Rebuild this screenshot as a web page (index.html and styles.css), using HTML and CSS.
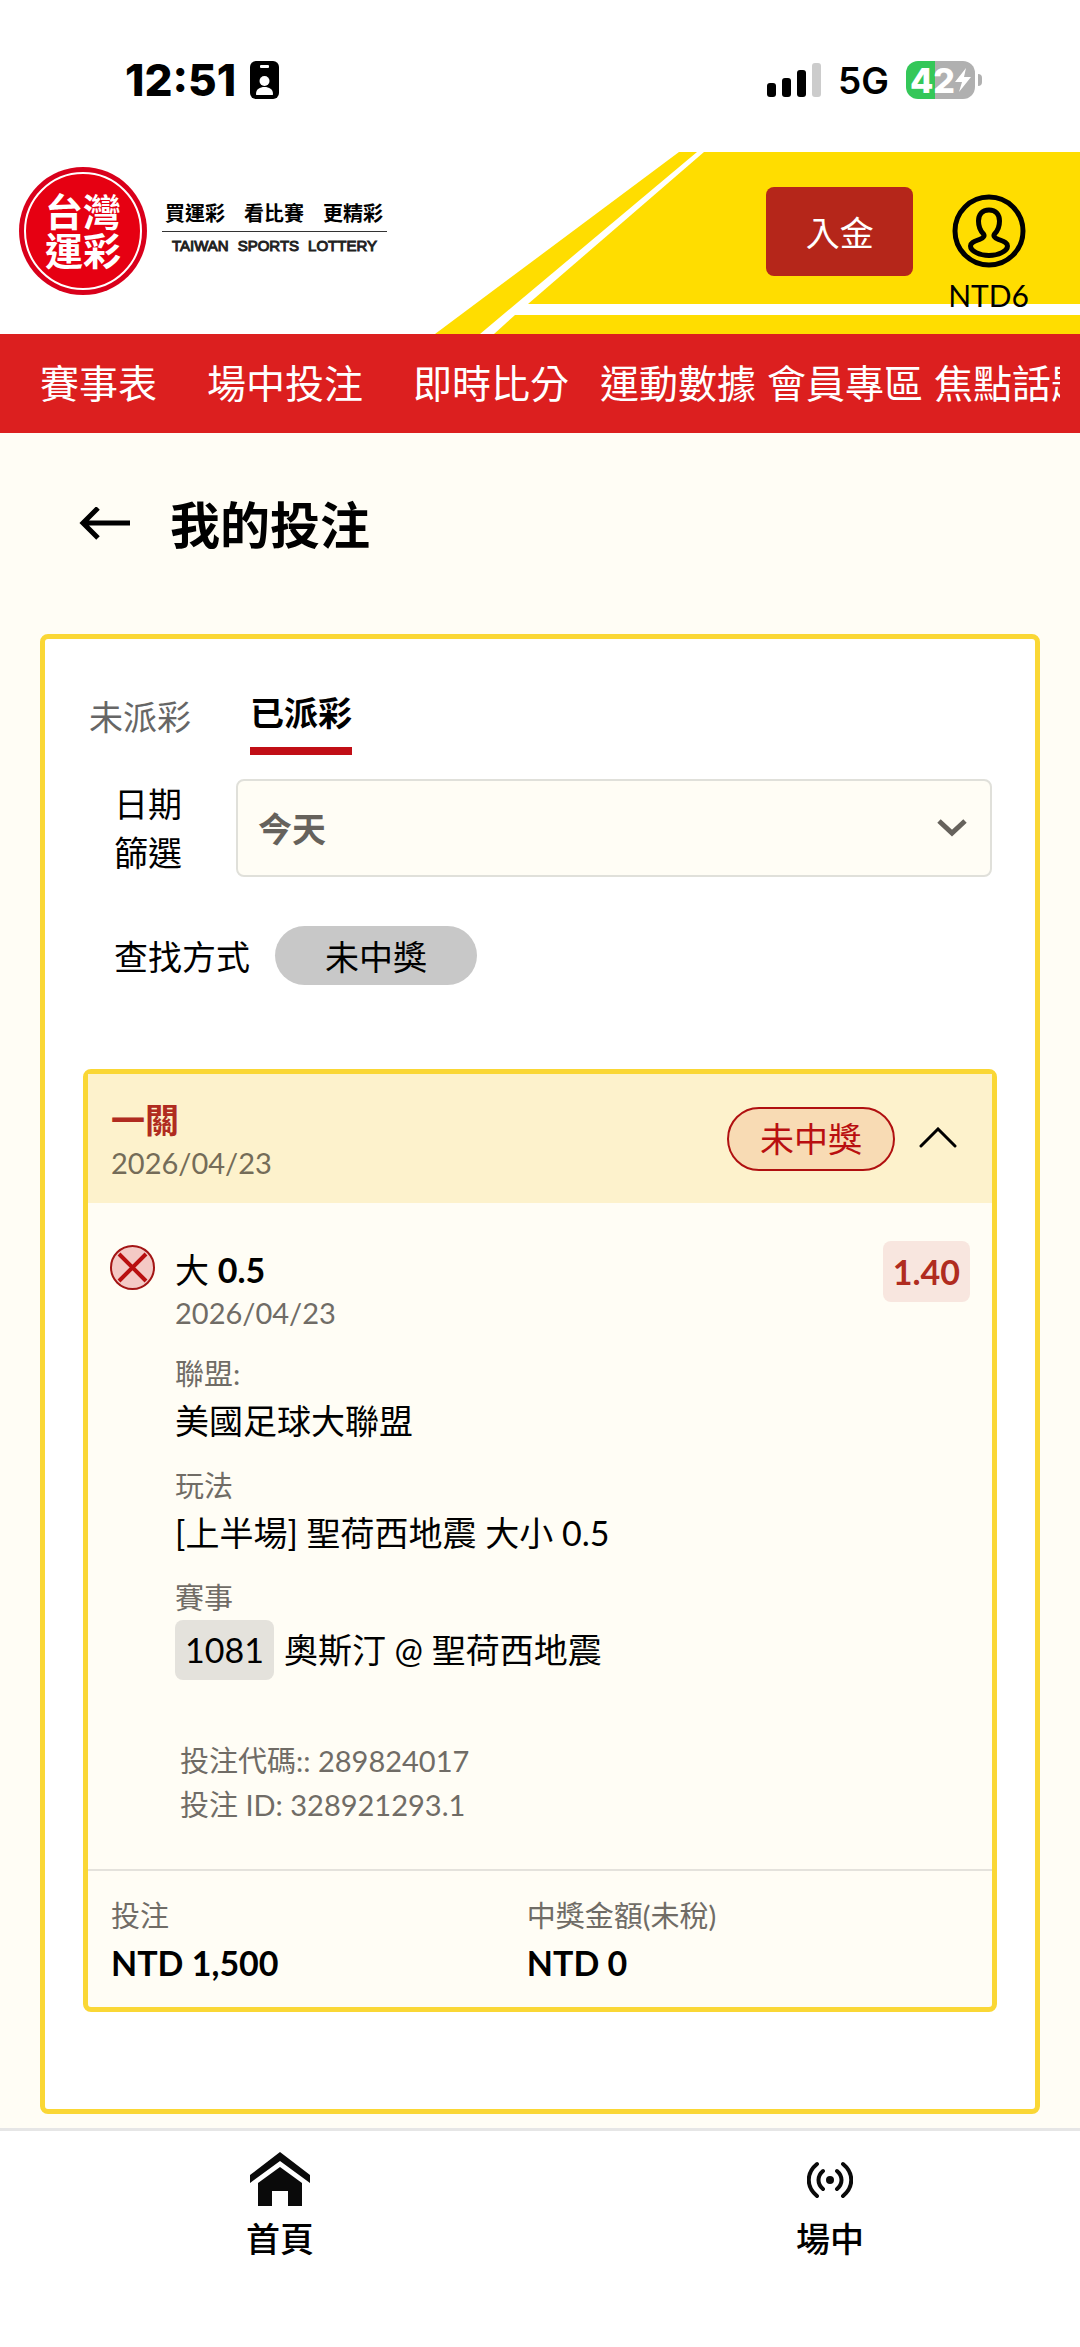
FILE: index.html
```html
<!DOCTYPE html>
<html lang="zh-Hant">
<head>
<meta charset="utf-8">
<meta name="viewport" content="width=device-width, initial-scale=1">
<title>我的投注</title>
<link rel="stylesheet" href="styles.css">
</head>
<body>
<div class="status">
  <div class="status-side">
    <span class="time">12:51</span>
    <svg class="id-badge" width="30" height="38" viewBox="0 0 30 38" aria-hidden="true">
      <rect width="29" height="38" rx="6"/>
      <rect x="10" y="4" width="9" height="3" rx="1" fill="#fff"/>
      <circle cx="14.500" cy="20" r="5" fill="#fff"/>
      <path d="M6 33c0-5 4-7 8.500-7s8.500 2 8.500 7c0 1-.5 1-1 1H7c-.5 0-1 0-1-1z" fill="#fff"/>
    </svg>
  </div>
  <div class="status-side status-right">
    <svg width="54" height="34" viewBox="0 0 54 34" aria-hidden="true">
      <rect x="0" y="20" width="9" height="14" rx="3"/>
      <rect x="15" y="15" width="9" height="19" rx="3"/>
      <rect x="30" y="7" width="9" height="27" rx="3"/>
      <rect x="45" y="0" width="9" height="34" rx="3" fill="#ccc"/>
    </svg>
    <span class="network">5G</span>
    <div class="battery">
      <div class="battery-body"><span>42</span>
        <svg width="16" height="24" viewBox="0 0 16 24" aria-hidden="true"><path d="M11 0 0 14h7L4 24 16 9H9z" fill="#fff"/></svg>
      </div>
      <div class="battery-nub"></div>
    </div>
  </div>
</div>

<header class="header">
  <svg class="header-art" viewBox="0 0 645 182" preserveAspectRatio="none" aria-hidden="true">
    <path d="M244 0h18L45 182H0z" fill="#fd0"/>
    <path d="M269 0H645V152H93z" fill="#fd0"/>
    <path d="M80 163H645V182H59z" fill="#fd0"/>
  </svg>
  <a class="brand" href="#">
    <span class="seal"><span class="seal-ring"><span>台灣</span><span>運彩</span></span></span>
    <span class="brand-text">
      <span class="slogan"><span>買運彩</span><span>看比賽</span><span>更精彩</span></span>
      <span class="brand-en"><span>TAIWAN</span><span>SPORTS</span><span>LOTTERY</span></span>
    </span>
  </a>
  <div class="account">
    <button class="deposit" type="button">入金</button>
    <a class="user" href="#">
      <svg width="74" height="74" viewBox="0 0 74 74" fill="none" stroke="#000" stroke-width="5" aria-hidden="true">
        <circle cx="37" cy="37" r="34"/>
        <path d="M37 16c-7 0-10.500 5-10.500 11 0 6 2 10 5 13 1.500 2-.5 4-3 5-6 2.500-10 3.500-10 7 0 5 9 9.500 18.500 9.500S55.500 57 55.500 52c0-3.500-4-4.500-10-7-2.500-1-4.500-3-3-5 3-3 5-7 5-13 0-6-3.500-11-10.500-11z"/>
      </svg>
      <span>NTD6</span>
    </a>
  </div>
</header>

<nav class="nav">
  <div class="nav-scroll">
    <a class="wide" href="#">賽事表</a>
    <a class="wide" href="#">場中投注</a>
    <a class="medium" href="#">即時比分</a>
    <a href="#">運動數據</a>
    <a href="#">會員專區</a>
    <a href="#">焦點話題</a>
  </div>
</nav>

<main class="main">
  <div class="title">
    <a href="#" aria-label="返回">
      <svg width="51" height="36" viewBox="0 0 51 36" fill="none" stroke="#000" stroke-width="5" aria-hidden="true"><path d="M19 1 4 16l15 15M4 16h47"/></svg>
    </a>
    <h1>我的投注</h1>
  </div>

  <section class="panel">
    <div class="tabs" role="tablist">
      <button class="tab" type="button" role="tab" aria-selected="false">未派彩</button>
      <button class="tab active" type="button" role="tab" aria-selected="true">已派彩</button>
    </div>
    <div class="filter">
      <label for="range">日期篩選</label>
      <div class="select">
        <select id="range"><option>今天</option></select>
        <svg width="30" height="18" viewBox="0 0 30 18" fill="none" stroke="#66625c" stroke-width="5" aria-hidden="true"><path d="M2 2l13 12L28 2"/></svg>
      </div>
    </div>
    <div class="mode">
      <span>查找方式</span>
      <button class="chip" type="button">未中獎</button>
    </div>

    <article class="bet">
      <header class="bet-head">
        <div class="bet-name">
          <h2>一關</h2>
          <p>2026/04/23</p>
        </div>
        <span class="result">未中獎</span>
        <button class="toggle" type="button" aria-label="收合">
          <svg width="38" height="24" viewBox="0 0 38 24" fill="none" stroke="#000" stroke-width="3" stroke-linecap="round" aria-hidden="true"><path d="M2 19 19 2l17 17"/></svg>
        </button>
      </header>
      <div class="bet-body">
        <svg class="lost" width="45" height="45" viewBox="0 0 45 45" aria-hidden="true">
          <circle cx="22.500" cy="22.500" r="21.500" fill="#f4c9c5" stroke="#a31515" stroke-width="2"/>
          <path d="M9 9l27 27M36 9 9 36" stroke="#b90f10" stroke-width="4"/>
        </svg>
        <div class="details">
          <h3>大 <b>0.5</b></h3>
          <p class="date">2026/04/23</p>
          <dl>
            <dt>聯盟:</dt>
            <dd>美國足球大聯盟</dd>
            <dt>玩法</dt>
            <dd>[上半場] 聖荷西地震 大小 0.5</dd>
            <dt>賽事</dt>
            <dd class="match"><span class="code">1081</span> 奧斯汀 @ 聖荷西地震</dd>
          </dl>
          <div class="ids">
            <p>投注代碼:: 289824017</p>
            <p>投注 ID: 328921293.1</p>
          </div>
        </div>
        <span class="odds">1.40</span>
      </div>
      <dl class="totals">
        <div><dt>投注</dt><dd>NTD 1,500</dd></div>
        <div><dt>中獎金額(未稅)</dt><dd>NTD 0</dd></div>
      </dl>
    </article>
  </section>
</main>

<nav class="bottom">
  <a href="#">
    <svg width="60" height="54" viewBox="0 0 60 54" fill="#0a0a0a" aria-hidden="true">
      <path d="M30 0 60 23v8L30 9 0 31v-8z"/>
      <path d="M30 15 52 31v23H38V39H22v15H8V31z"/>
    </svg>
    <span>首頁</span>
  </a>
  <a href="#">
    <svg width="46" height="54" viewBox="0 0 46 54" fill="none" stroke="#0a0a0a" stroke-width="4" stroke-linecap="round" aria-hidden="true">
      <circle cx="23" cy="28" r="4" fill="#0a0a0a" stroke="none"/>
      <path d="M16 19c-6 5-6 13 0 18M30 19c6 5 6 13 0 18M10 12c-11 9-11 23 0 32M36 12c11 9 11 23 0 32"/>
    </svg>
    <span>場中</span>
  </a>
</nav>
</body>
</html>
```
FILE: styles.css
```css
* { box-sizing: border-box; }
body {
  margin: 0;
  background: #fff;
  color: #000;
  font-family: Lato, "Noto Sans CJK TC", sans-serif;
  font-size: 34px;
}
a { color: inherit; text-decoration: none; }
h1, h2, h3, p, dl, dd { margin: 0; }
button, select { font: inherit; color: inherit; border: 0; padding: 0; background: none; }
svg { display: block; flex: none; }

/* Device status bar */
.status {
  display: flex;
  justify-content: space-between;
  height: 152px;
  padding: 8px 98px 0 125px;
  font-family: Inter, sans-serif;
}
.status-side { display: flex; align-items: center; gap: 14px; }
.status-right { gap: 17px; }
.time { font-size: 44px; font-weight: 800; }
.network { font-size: 37px; font-weight: 600; }
.battery { display: flex; align-items: center; gap: 3px; }
.battery-body {
  display: flex;
  align-items: center;
  justify-content: center;
  width: 69px;
  height: 38px;
  border-radius: 12px;
  background: linear-gradient(90deg, #34c759 42%, #b0b0b0 42%);
  color: #fff;
  font-size: 34px;
  font-weight: 800;
}
.battery-nub { width: 4px; height: 12px; border-radius: 0 4px 4px 0; background: #b0b0b0; }

/* Brand header */
.header {
  position: relative;
  display: flex;
  justify-content: space-between;
  height: 182px;
}
.header-art { position: absolute; top: 0; right: 0; width: 645px; height: 100%; }
.brand { position: relative; display: flex; gap: 15px; padding: 15px 0 0 19px; }
.seal {
  width: 128px;
  height: 128px;
  padding: 5px;
  border-radius: 50%;
  background: #d9001b;
}
.seal-ring {
  display: flex;
  flex-direction: column;
  align-items: center;
  justify-content: center;
  height: 118px;
  border: 2px solid #fff;
  border-radius: 50%;
  background: #e60012;
  color: #fff;
  font-size: 38px;
  line-height: 39px;
  font-weight: 700;
}
.brand-text { padding-top: 32px; }
.slogan {
  display: flex;
  justify-content: space-between;
  padding: 0 4px 3px 3px;
  border-bottom: 1px solid #333;
  font-size: 20px;
  line-height: 29px;
  font-weight: 700;
  gap: 19px;
}
.brand-en {
  display: flex;
  justify-content: center;
  gap: 9px;
  padding-top: 5px;
  font: 15px/18px "Liberation Sans", sans-serif;
  color: #222;
  -webkit-text-stroke: 1px #222;
}
.account { position: relative; display: flex; gap: 35px; padding: 35px 51px 0 0; }
.deposit { width: 147px; height: 89px; border-radius: 8px; background: #b5261a; color: #fff; }
.user {
  display: flex;
  flex-direction: column;
  align-items: center;
  padding-top: 7px;
  font-size: 30px;
  line-height: 40px;
  gap: 7px;
}

/* Section navigation */
.nav { padding: 0 20px; background: #dc1f1f; color: #fff; font-size: 39px; line-height: 99px; }
.nav-scroll { display: flex; gap: 11px; padding-left: 20px; overflow: hidden; white-space: nowrap; }
.nav-scroll a { flex: none; }
.nav-scroll .wide { padding-right: 39px; }
.nav-scroll .medium { padding-right: 20px; }

.main { padding: 0 40px 14px; background: #fffdf5; }
.title { display: flex; align-items: center; gap: 40px; padding: 60px 39px 77px; }
.title h1 { font-size: 50px; line-height: 64px; font-weight: 700; }

.panel {
  padding: 50px 38px 97px;
  border: 5px solid #fad735;
  border-radius: 8px;
  background: #fff;
}
.tabs { display: flex; align-items: flex-start; gap: 59px; padding: 0 6px; }
.tab { padding-top: 4px; line-height: 48px; color: #666; }
.tab.active {
  padding: 0 0 10px;
  border-bottom: 8px solid #c10e16;
  color: #000;
  font-weight: 700;
}
.filter { display: flex; gap: 54px; margin-top: 24px; padding: 0 5px 0 31px; }
.filter label { width: 68px; line-height: 49px; }
.select { flex: 1; display: grid; align-items: center; }
.select select, .select svg { grid-area: 1 / 1; }
.select select {
  appearance: none;
  width: 100%;
  height: 98px;
  padding: 0 20px;
  border: 2px solid #e0e0da;
  border-radius: 8px;
  background: #fffdf5;
  color: #66625c;
  font-weight: 700;
}
.select svg { justify-self: end; margin-right: 25px; pointer-events: none; }
.mode { display: flex; align-items: center; gap: 25px; margin-top: 49px; padding-left: 31px; }
.chip { height: 59px; padding: 0 50px; border-radius: 30px; background: #c8c8c8; }

/* Bet slip */
.bet {
  margin-top: 84px;
  border: 5px solid #fad735;
  border-radius: 8px;
  background: #fffdf5;
}
.bet-head {
  display: flex;
  align-items: center;
  gap: 24px;
  min-height: 129px;
  padding: 0 35px 0 23px;
  background: #fdf2cc;
}
.bet-name { flex: 1; padding-top: 5px; line-height: 43px; }
.bet-name h2 { font-size: 34px; color: #b02c20; }
.bet-name p { font-size: 29px; color: #746c58; }
.result {
  padding: 0 31px;
  border: 2px solid #b01010;
  border-radius: 32px;
  background: #f8dbb4;
  color: #b90f10;
  line-height: 60px;
}
.bet-body { display: flex; gap: 20px; padding: 38px 22px 42px 22px; }
.lost { margin-top: 4px; }
.details { flex: 1; padding-top: 7px; }
.details h3 { font-size: 34px; line-height: 44px; font-weight: 400; }
.date { font-size: 29px; line-height: 42px; color: #706c66; }
dt { font-size: 29px; line-height: 44px; color: #706c66; }
dd { line-height: 50px; }
.details dt { margin-top: 18px; }
.match { display: flex; align-items: center; gap: 10px; line-height: 60px; }
.code { padding: 0 10px; border-radius: 8px; background: #e4e2dc; }
.ids { padding: 59px 0 0 5px; font-size: 29px; line-height: 44px; color: #706c66; }
.odds {
  align-self: flex-start;
  padding: 0 10px;
  border-radius: 8px;
  background: #f8e6df;
  color: #b02c20;
  line-height: 61px;
  font-weight: 700;
}
.totals {
  display: grid;
  grid-template-columns: 46% 54%;
  padding: 23px 0 19px;
  border-top: 2px solid #e4e2dc;
}
.totals div { padding-left: 23px; }
.totals dd { font-weight: 700; }

/* Bottom tab bar */
.bottom {
  display: grid;
  grid-template-columns: 56fr 50fr;
  column-gap: 20px;
  padding: 21px 0 86px;
  border-top: 3px solid #e6e6e6;
  line-height: 44px;
  font-weight: 500;
}
.bottom a { display: flex; flex-direction: column; align-items: center; gap: 11px; }
```
